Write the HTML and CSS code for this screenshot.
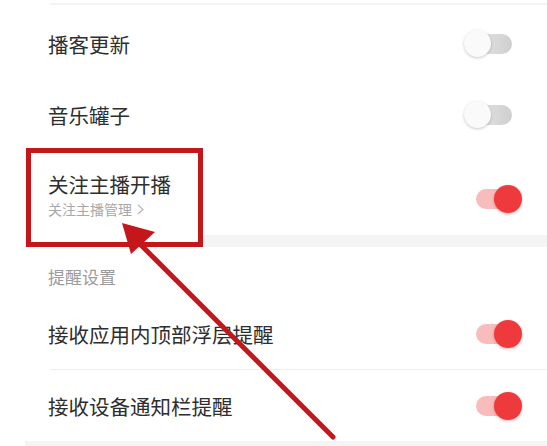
FILE: index.html
```html
<!DOCTYPE html>
<html>
<head>
<meta charset="utf-8">
<link rel="stylesheet" href="styles.css">
</head>
<body>

<div class="screen">

  <div class="divider top"></div>

  <!-- Follow section -->
  <div class="row">
    <span class="label">播客更新</span>
    <span class="switch"><span class="track"></span><span class="knob"></span></span>
  </div>

  <div class="row">
    <span class="label">音乐罐子</span>
    <span class="switch"><span class="track"></span><span class="knob"></span></span>
  </div>

  <div class="row tall">
    <div class="callout"></div>
    <div class="texts">
      <div class="label title">关注主播开播</div>
      <div class="sub">关注主播管理
        <svg class="chev" width="7" height="11" viewBox="0 0 7 11"><polyline points="1,1 6,5.5 1,10" fill="none" stroke="#b5b5b5" stroke-width="1.2"/></svg>
      </div>
    </div>
    <span class="switch on low"><span class="track"></span><span class="knob"></span></span>
  </div>

  <div class="band"></div>

  <!-- Reminder section -->
  <div class="section-title">提醒设置</div>

  <div class="row">
    <span class="label">接收应用内顶部浮层提醒</span>
    <span class="switch on"><span class="track"></span><span class="knob"></span></span>
  </div>

  <div class="divider"></div>

  <div class="row">
    <span class="label">接收设备通知栏提醒</span>
    <span class="switch on"><span class="track"></span><span class="knob"></span></span>
  </div>

  <div class="band"></div>

</div>

<!-- annotation arrow -->
<svg class="arrow" width="547" height="446" viewBox="0 0 547 446">
  <line x1="333" y1="437" x2="134" y2="238" stroke="#c3171c" stroke-width="5" stroke-linecap="round"/>
  <polygon points="122,223 155,232 131,254" fill="#c3171c"/>
</svg>

</body>
</html>
```

FILE: styles.css
```css
body {
    margin: 0;
    background: #fff;
    font-family: "Noto Sans CJK SC", "Noto Sans", sans-serif;
    color: #2e2e2e;
}

.screen {
    margin-left: 25px;
    width: 522px;
}

/* thin line above the first row */
.divider {
    height: 1px;
    margin-left: 25px;
    background: #eeeeee;
}

.divider.top {
    height: 2px;
    margin-top: 3px;
    margin-bottom: 3px;
    background: #f3f3f3;
}

.row {
    position: relative;
    display: flex;
    align-items: center;
    justify-content: space-between;
    height: 71px;
    padding-left: 23px;
    padding-right: 25px;
}

.row.tall {
    height: 85px;
}

.label {
    font-size: 20.5px;
    line-height: 26px;
    position: relative;
    z-index: 2;
}

.label.title {
    line-height: 24px;
    margin-bottom: 4px;
}

.texts {
    position: relative;
    z-index: 2;
    margin-top: 5px;
}

.sub {
    font-size: 14px;
    line-height: 18px;
    color: #a8a8a8;
    display: flex;
    align-items: center;
    gap: 5px;
}

/* red annotation frame around the row text */
.callout {
    position: absolute;
    left: 1px;
    top: -2px;
    width: 177px;
    height: 99px;
    box-sizing: border-box;
    border: 5px solid #c3171c;
    background: #fff;
    z-index: 1;
}

.band {
    height: 12px;
    background: #f4f4f4;
}

.section-title {
    font-size: 17px;
    color: #9b9b9b;
    padding: 17px 0 0 23px;
    height: 34px;
    line-height: 26px;
}

/* switches */
.switch {
    position: relative;
    width: 58px;
    height: 28px;
    flex: none;
}

.switch .track {
    position: absolute;
    left: 12px;
    right: 10px;
    top: 4px;
    height: 20px;
    border-radius: 10px;
    background: linear-gradient(to right, #e4e4e4, #cfcfcf);
}

.switch .knob {
    position: absolute;
    left: 0;
    top: 0;
    width: 27px;
    height: 27px;
    border-radius: 50%;
    background: #fafafa;
    box-shadow: 0 1px 3px rgba(0, 0, 0, 0.22);
}

.switch.on .track {
    background: #f8bcbc;
}

.switch.on .knob {
    left: 30px;
    width: 28px;
    height: 28px;
    background: #ef3a3d;
    box-shadow: 0 1px 3px rgba(150, 20, 20, 0.3);
}

.switch.low {
    margin-top: 12px;
}

.arrow {
    position: absolute;
    left: 0;
    top: 0;
    z-index: 5;
    pointer-events: none;
}
```
